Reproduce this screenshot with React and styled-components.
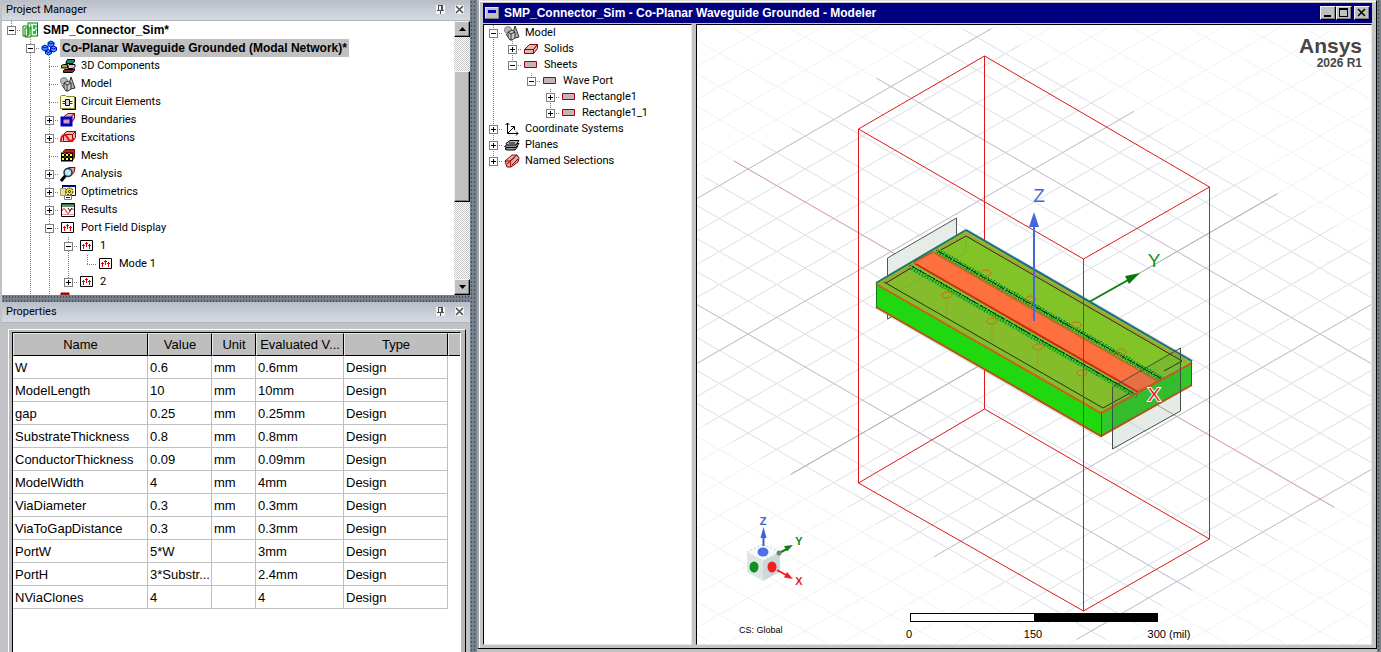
import React from 'react';
import styled, { createGlobalStyle, css } from 'styled-components';

const GlobalStyle = createGlobalStyle`
  * {
    box-sizing: border-box;
  }
  body {
    margin: 0;
    background: #c0c0c0;
    color: #000;
    font-family: "Liberation Sans", Arial, sans-serif;
    font-size: 11px;
    overflow: hidden;
  }
  button {
    font: inherit;
    padding: 0;
    margin: 0;
  }
`;

const Workspace = styled.div`
  display: grid;
  grid-template-columns: 470px 7px minmax(0, 1fr) 4px;
  height: 100vh;
`;

const Texture = styled.div`
  background-color: #78828c;
  background-image: radial-gradient(#48525c 1px, transparent 1px);
  background-size: 3px 4px;
  height: ${props => (props.$height ? `${props.$height}px` : 'auto')};
  flex: none;
`;

const Dock = styled.div`
  display: flex;
  flex-direction: column;
  min-height: 0;
  padding-left: 2px;
  background: #c0c2c6;
`;

const Pane = styled.section`
  display: flex;
  flex-direction: column;
  flex: ${props => props.$grow} 1 0;
  min-height: 0;
`;

const PaneHeader = styled.header`
  display: flex;
  align-items: center;
  gap: 10px;
  flex: none;
  height: 21px;
  padding: 0 6px 2px 4px;
  background: linear-gradient(#b9bdc5, #d6dae2);
  border-bottom: 1px solid #b2b6bc;
`;

const PaneTitle = styled.h2`
  flex: 1;
  margin: 0;
  font-family: Roboto, "Liberation Sans", sans-serif;
  font-size: 11px;
  font-weight: normal;
`;

const PaneButton = styled.button`
  display: flex;
  width: 9px;
  height: 9px;
  border: 0;
  background: #f4f4f4;
`;

const PaneBody = styled.div`
  display: flex;
  flex: 1;
  min-height: 0;
  background: #fff;
`;

const Tree = styled.ul`
  flex: 1;
  min-width: 0;
  margin: 0;
  padding: 0;
  list-style: none;
  overflow: hidden;
  background: #fff;
`;

const TreeRow = styled.li`
  display: flex;
  align-items: center;
  height: ${props => props.$height}px;
  white-space: nowrap;
`;

const vLine = 'repeating-linear-gradient(#808080 0 1px, transparent 1px 2px)';
const hLine = 'repeating-linear-gradient(90deg, #808080 0 1px, transparent 1px 2px)';

const guides = {
  none: 'none',
  line: `${vLine} 9px 0 / 1px 100% no-repeat`,
  tee: `${vLine} 9px 0 / 1px 100% no-repeat, ${hLine} 9px 50% / 10px 1px no-repeat`,
  elbow: `${vLine} 9px 0 / 1px 50% no-repeat, ${hLine} 9px 50% / 10px 1px no-repeat`,
};

const Guide = styled.span`
  display: flex;
  align-items: center;
  justify-content: center;
  flex: none;
  width: 19px;
  height: 100%;
  background: ${props => guides[props.$type]};
`;

const Toggle = styled.button`
  display: flex;
  width: 9px;
  height: 9px;
  border: 1px solid #808080;
  background: #fff;
`;

const Label = styled.span`
  margin-left: 3px;
  padding: 1px 2px;
  font-family: ${props => (props.$strong ? '"Liberation Sans"' : 'Roboto')}, Arial, sans-serif;
  font-size: ${props => (props.$strong ? '12px' : '11px')};
  font-weight: ${props => (props.$strong ? 'bold' : 'normal')};
  line-height: 16px;
  background: ${props => (props.$selected ? '#c0c0c0' : 'transparent')};
`;

const Icon = styled.svg`
  flex: none;
  width: 16px;
  height: 16px;
  margin-left: 1px;
`;

const ScrollBar = styled.div`
  display: flex;
  flex-direction: column;
  flex: none;
  width: 16px;
  background: repeating-conic-gradient(#c8c8c8 0 25%, #fff 0 50%) 0 0 / 2px 2px;
`;

const raised = css`
  border: 1px solid;
  border-color: #f4f4f4 #000 #000 #f4f4f4;
  background: #c0c0c0;
  box-shadow: inset -1px -1px #808080;
`;

const ScrollButton = styled.button`
  ${raised}
  display: flex;
  align-items: center;
  justify-content: center;
  flex: none;
  height: 16px;
`;

const ScrollGap = styled.div`
  flex: ${props => props.$grow};
`;

const ScrollThumb = styled.div`
  ${raised}
  flex: 130;
`;

const TableArea = styled.div`
  flex: 1;
  min-height: 0;
  margin: 6px 4px 0 6px;
  padding: 2px 4px 0 3px;
  border: solid;
  border-width: 1px 1px 0 1px;
  border-color: #fff #000 #fff #fff;
  background: #b8b8b8;
`;

const TableFrame = styled.div`
  height: 100%;
  overflow: hidden;
  border: solid;
  border-width: 1px 1px 0 1px;
  border-color: #000 #fff #000 #000;
  background: #fff;
`;

const Table = styled.table`
  width: 100%;
  table-layout: fixed;
  border-collapse: separate;
  border-spacing: 0;
  font-size: 13px;
`;

const HeadCell = styled.th`
  height: 23px;
  padding: 0 2px;
  font-weight: normal;
  white-space: nowrap;
  overflow: hidden;
  border: solid;
  border-width: 1px;
  border-color: #e8e8e8 #000 #000 #e8e8e8;
  background: #bebebe;
  &:last-child {
    border-right: 0;
  }
`;

const Cell = styled.td`
  height: 23px;
  padding: 0 2px;
  white-space: nowrap;
  overflow: hidden;
  border-right: 1px solid #c0c0c0;
  border-bottom: 1px solid #c0c0c0;
  &:last-child {
    border: 0;
  }
`;

const WindowFrame = styled.main`
  display: flex;
  flex-direction: column;
  min-width: 0;
  min-height: 0;
  margin-bottom: 3px;
  padding: 1px 4px 3px 4px;
  border: solid;
  border-width: 1px 1px 1px 2px;
  border-color: #e0e0e0 #000 #000 #a0a4a8;
  background: #c4c4c4;
  box-shadow: inset 1px 1px #fff;
`;

const TitleBar = styled.header`
  display: flex;
  align-items: center;
  flex: none;
  height: 20px;
  margin-top: 1px;
  padding: 0 2px;
  background: #000080;
`;

const Title = styled.h1`
  flex: 1;
  margin: 0 0 0 5px;
  font-size: 12px;
  color: #fff;
  white-space: nowrap;
  overflow: hidden;
`;

const WindowIcon = styled.svg`
  flex: none;
  width: 14px;
  height: 12px;
`;

const WindowButton = styled.button`
  ${raised}
  display: flex;
  width: 16px;
  height: 14px;
  margin-left: ${props => props.$gap || 0}px;
`;

const WindowBody = styled.div`
  display: grid;
  grid-template-columns: 209px minmax(0, 1fr);
  gap: 4px;
  flex: 1;
  min-height: 0;
  margin-top: 1px;
`;

const Sunken = styled.div`
  display: flex;
  position: relative;
  min-height: 0;
  overflow: hidden;
  border: 1px solid;
  border-color: #000 #e8e8e8 #e8e8e8 #000;
  background: #fff;
`;

const Scene = styled.svg`
  display: block;
  width: 100%;
  height: 100%;
`;

const Brand = styled.div`
  position: absolute;
  top: 10px;
  right: 9px;
  color: #464646;
  font-weight: bold;
  text-align: right;
`;

const BrandName = styled.div`
  font-size: 21px;
  line-height: 22px;
`;

const BrandVersion = styled.div`
  font-size: 12px;
  line-height: 13px;
`;

const SystemNote = styled.div`
  position: absolute;
  left: 42px;
  bottom: 8px;
  font-size: 9px;
  line-height: 12px;
`;

const icons = {
  project: (
    <>
      <rect x="6" y="1" width="9.5" height="13" fill="#e8ffe8" stroke="#008000" />
      <path d="M1 4h5v10H1z M3 6h6v9H3z" fill="#e8ffe8" stroke="#108010" />
      <path d="M5 8h3M5 10h3M5 12h3M8 3h1M8 5h2M8 7h1" stroke="#008000" />
      <path d="M11 3h2v4h-2zM11 9h3v3h-3z" fill="#00d020" />
      <path d="M13 8h2M14 3v3" stroke="#00a020" />
    </>
  ),
  design: (
    <g fill="#28a8f8" stroke="#0000c8">
      <path d="M7 2.500l3-1.500 3 1.500v3l-3 1.500-3-1.500z" />
      <path d="M1 6.500l3-1.500 3 1.500v3l-3 1.500-3-1.500z" />
      <path d="M9.500 7.500l3-1.500 3 1.500v3l-3 1.500-3-1.500z" />
      <path d="M4.500 11l3-1.500 3 1.500v2.500l-3 1.500-3-1.500z" />
      <path d="M7 2.500l3 1.500 3-1.500M1 6.500l3 1.500 3-1.500M9.500 7.500l3 1.500 3-1.500M4.500 11l3 1.500 3-1.500" fill="none" />
    </g>
  ),
  components: (
    <g stroke="#000">
      <path d="M6 4.500l1.500-3h7v2l-1.500 2H6z" fill="#208878" />
      <path d="M1.500 9.500v-2l2-1h4v3.500h-6z" fill="#a8a820" />
      <path d="M8 10V7.500l1-1h6v2l-2 2H8z" fill="#d0d0d0" />
      <path d="M3.500 14.500v-2l1.500-1h8l1.500-1v2l-2 2z" fill="#902020" />
    </g>
  ),
  model: (
    <g stroke="#303030">
      <circle cx="4" cy="5" r="3.5" fill="#b8b8b8" stroke="#808080" />
      <path d="M11 1l4 11-4 1-3-2z" fill="#b0b0b0" />
      <path d="M4 7l4-2 3 2v6l-3 2H6l-2-3z" fill="#c8c8c8" />
      <path d="M4 7l3 2 4-2M7 9v6M2 9l2 3" fill="none" />
    </g>
  ),
  circuit: (
    <>
      <path d="M.5 2.500l1-1h4l1 1h8v12H.5z" fill="#ffffa8" stroke="#888830" />
      <path d="M2 4h11v9H2z" fill="#fffff0" />
      <path d="M15.500 3v12.500H2" fill="none" stroke="#000" />
      <path d="M5.500 5.500h4v6h-4z" fill="#d8d8d8" stroke="#000" />
      <path d="M2.500 7.500h3M2.500 9.500h3M9.500 7.500h3M9.500 9.500h3" stroke="#b00000" />
    </>
  ),
  boundary: (
    <>
      <path d="M4 4.500l4-3h6.500v5l-3 4" fill="#e8b0b8" stroke="#a00000" />
      <path d="M11 4.500l3.500-3" stroke="#a00000" />
      <path d="M2 6h9v7H2z" fill="#d0a0c0" stroke="#0000c0" strokeWidth="3" />
    </>
  ),
  excitation: (
    <>
      <path d="M3.500 4.500l3-3h9v6l-3 4h-9z" fill="#e8b8b8" stroke="#a00000" />
      <path d="M12.500 4.500l3-3M3.500 4.500h9v7" fill="none" stroke="#a00000" />
      <path d="M1 11c0-6 4-8 6-4s4 6 7 1" fill="none" stroke="#f01010" strokeWidth="2" />
      <path d="M0 11.500h4" stroke="#f01010" />
    </>
  ),
  mesh: (
    <>
      <path d="M3 4l2-2.500h9.500v8L12 13" fill="#c02020" stroke="#700000" />
      <path d="M1 4.500h12v9H1z" fill="#000" />
      <path d="M2 6h2v2H2zM6 6h2v2H6zM10 6h2v2h-2zM2 10h2v2H2zM6 10h2v2H6zM10 10h2v2h-2zM4.500 5h1v1h-1zM8.500 5h1v1h-1zM4.500 8.500h1v1h-1zM8.500 8.500h1v1h-1z" fill="#ffff30" />
    </>
  ),
  analysis: (
    <>
      <path d="M6 4l3-2.500h6l-1 5-4 4" fill="#e0a8a8" stroke="#900000" />
      <path d="M6 9l-5 6" stroke="#000" strokeWidth="3" />
      <circle cx="8" cy="6.500" r="4" fill="#a8e0f8" stroke="#203040" strokeWidth="1.500" />
      <path d="M6 7l2-3M8 9l2-3" stroke="#fff" />
    </>
  ),
  optimetrics: (
    <>
      <path d="M2.500 1.500h13v10h-13z" fill="#fff" stroke="#000080" />
      <path d="M2 2h14" stroke="#000080" strokeWidth="2" />
      <path d="M.5 4.500h5v7h-5z" fill="#e8e0a0" stroke="#a0a060" />
      <circle cx="9.500" cy="7.500" r="3.500" fill="#f8e820" stroke="#000" strokeDasharray="2 1" />
      <circle cx="9.500" cy="7.500" r="1" fill="#fff" stroke="#000" />
      <path d="M4.500 11.500h7v4h-7z" fill="#fff" stroke="#808080" />
      <path d="M6 13.500h4" stroke="#0000c0" />
    </>
  ),
  results: (
    <>
      <path d="M1.500 1.500h13v13h-13z" fill="#fff" stroke="#000" />
      <path d="M2 2.500h12" stroke="#108030" />
      <path d="M2 4h12" stroke="#000" />
      <path d="M2 9c1-3 3-3 4 0s3 3 4 0 2-3 4-1" fill="none" stroke="#e00000" />
      <path d="M8 6l2 3 2-3" fill="none" stroke="#202020" />
      <path d="M2 12.500h12" stroke="#f09090" />
    </>
  ),
  port: (
    <>
      <path d="M1.500 2.500h12v10h-12z" fill="#fff" stroke="#000" />
      <path d="M4.500 6v5M7.500 4v5M10.500 6v5M3 7.500h3M6 5.500h3M9 7.500h3" stroke="#e00000" />
    </>
  ),
  overlay: <path d="M1 1h8v3h4v10H1z" fill="#c01010" stroke="#700000" />,
  solid: (
    <g fill="#e0b8b0" stroke="#900000">
      <path d="M1.500 8.500l5-5h8l-4 5z" />
      <path d="M1.500 8.500h9v4h-9z" />
      <path d="M10.500 8.500l4-5v4l-4 5z" />
    </g>
  ),
  sheet: <path d="M1.500 4.500h12v6h-12z" fill="#c8b4b4" stroke="#a00010" />,
  axes: (
    <g fill="none" stroke="#000">
      <path d="M3.500 2v10.500H14M1.500 4l2-2 2 2M12 10.500l2 2-2 2M3.500 12.500L10 6M7 5.500h3.500V9" />
    </g>
  ),
  planes: (
    <g stroke="#000" fill="#989898">
      <path d="M1 12l4-3h9l-3 4H3z" />
      <path d="M.5 9.500l4-3h10.500l-3 4h-10z" />
      <path d="M2 6.500l4-3h9l-3 4.500H3z" fill="#b8b8b8" />
      <path d="M5 6h6" />
    </g>
  ),
  selections: (
    <g stroke="#980000" fill="#d8b0a8">
      <path d="M1 8l7-6h5l2 3-1 4-7 5H3z" />
      <path d="M1 8h5l7-6M6 8l1 6M3 11l8-7M8 12l6-6" fill="none" />
    </g>
  ),
};

// Guide codes: "." blank, "|" line, "t" tee, "l" elbow,
// "p"/"m" plus and minus with a full line, "P"/"M" the same on a last child.
const cellTypes = {
  '.': ['none'],
  '|': ['line'],
  t: ['tee'],
  l: ['elbow'],
  p: ['tee', 'plus'],
  P: ['elbow', 'plus'],
  m: ['tee', 'minus'],
  M: ['elbow', 'minus'],
};

const projectTree = [
  { cells: 'M', icon: 'project', label: 'SMP_Connector_Sim*', strong: true },
  { cells: '.m', icon: 'design', label: 'Co-Planar Waveguide Grounded (Modal Network)*', strong: true, selected: true },
  { cells: '.|t', icon: 'components', label: '3D Components' },
  { cells: '.|t', icon: 'model', label: 'Model' },
  { cells: '.|t', icon: 'circuit', label: 'Circuit Elements' },
  { cells: '.|p', icon: 'boundary', label: 'Boundaries' },
  { cells: '.|p', icon: 'excitation', label: 'Excitations' },
  { cells: '.|t', icon: 'mesh', label: 'Mesh' },
  { cells: '.|p', icon: 'analysis', label: 'Analysis' },
  { cells: '.|p', icon: 'optimetrics', label: 'Optimetrics' },
  { cells: '.|p', icon: 'results', label: 'Results' },
  { cells: '.|m', icon: 'port', label: 'Port Field Display' },
  { cells: '.||m', icon: 'port', label: '1' },
  { cells: '.|||l', icon: 'port', label: 'Mode 1' },
  { cells: '.||P', icon: 'port', label: '2' },
  { cells: '.||', icon: 'overlay' },
];

const modelTree = [
  { cells: 'm', icon: 'model', label: 'Model' },
  { cells: '|p', icon: 'solid', label: 'Solids' },
  { cells: '|M', icon: 'sheet', label: 'Sheets' },
  { cells: '|.M', icon: 'sheet', label: 'Wave Port' },
  { cells: '|..p', icon: 'sheet', label: 'Rectangle1' },
  { cells: '|..P', icon: 'sheet', label: 'Rectangle1_1' },
  { cells: 'p', icon: 'axes', label: 'Coordinate Systems' },
  { cells: 'p', icon: 'planes', label: 'Planes' },
  { cells: 'P', icon: 'selections', label: 'Named Selections' },
];

const columns = [
  { title: 'Name', width: 135 },
  { title: 'Value', width: 64 },
  { title: 'Unit', width: 44 },
  { title: 'Evaluated V...', width: 88 },
  { title: 'Type', width: 104 },
  { title: '' },
];

const variables = [
  ['W', '0.6', 'mm', '0.6mm'],
  ['ModelLength', '10', 'mm', '10mm'],
  ['gap', '0.25', 'mm', '0.25mm'],
  ['SubstrateThickness', '0.8', 'mm', '0.8mm'],
  ['ConductorThickness', '0.09', 'mm', '0.09mm'],
  ['ModelWidth', '4', 'mm', '4mm'],
  ['ViaDiameter', '0.3', 'mm', '0.3mm'],
  ['ViaToGapDistance', '0.3', 'mm', '0.3mm'],
  ['PortW', '5*W', '', '3mm'],
  ['PortH', '3*Substr...', '', '2.4mm'],
  ['NViaClones', '4', '', '4'],
];

function TreeView({ items, rowHeight }) {
  return (
    <Tree>
      {items.map((item, i) => (
        <TreeRow key={i} $height={rowHeight}>
          {item.cells.split('').map((code, j) => {
            const [type, toggle] = cellTypes[code];
            return (
              <Guide key={j} $type={type}>
                {toggle && (
                  <Toggle aria-label={toggle === 'plus' ? 'Expand' : 'Collapse'}>
                    <svg width="7" height="7" stroke="#000" shapeRendering="crispEdges">
                      <path d={toggle === 'plus' ? 'M1 3.500h5M3.500 1v5' : 'M1 3.500h5'} />
                    </svg>
                  </Toggle>
                )}
              </Guide>
            );
          })}
          <Icon viewBox="0 0 16 16" fill="none">{icons[item.icon]}</Icon>
          {item.label && (
            <Label $strong={item.strong} $selected={item.selected}>{item.label}</Label>
          )}
        </TreeRow>
      ))}
    </Tree>
  );
}

function DockHeader({ title }) {
  return (
    <PaneHeader>
      <PaneTitle>{title}</PaneTitle>
      <PaneButton aria-label="Auto hide">
        <svg width="9" height="9" fill="none" stroke="#505050" shapeRendering="crispEdges">
          <path d="M2.500 5V.5h4V5M1 5.500h7M5.500 1v4M4.500 6v3" />
        </svg>
      </PaneButton>
      <PaneButton aria-label="Close">
        <svg width="9" height="9" stroke="#505050">
          <path d="M1 1l7 7M8 1l-7 7" strokeWidth="1.500" />
        </svg>
      </PaneButton>
    </PaneHeader>
  );
}

function PropertyTable() {
  return (
    <Table>
      <colgroup>
        {columns.map((col, i) => <col key={i} width={col.width} />)}
      </colgroup>
      <thead>
        <tr>
          {columns.map((col, i) => <HeadCell key={i}>{col.title}</HeadCell>)}
        </tr>
      </thead>
      <tbody>
        {variables.map((row) => (
          <tr key={row[0]}>
            {row.map((value, i) => <Cell key={i}>{value}</Cell>)}
            <Cell>Design</Cell>
            <Cell />
          </tr>
        ))}
      </tbody>
    </Table>
  );
}

// Isometric grid: u runs along the X axis, v along the Y axis.
const project = (u, v) => [1034 + 28.6 * (u + v), 334 + 16.5 * (u - v)];

const segment = (u1, v1, u2, v2) => {
  const [x1, y1] = project(u1, v1);
  const [x2, y2] = project(u2, v2);
  return `M${x1.toFixed(1)} ${y1.toFixed(1)}L${x2.toFixed(1)} ${y2.toFixed(1)}`;
};

const range = (from, to) => Array.from({ length: to - from + 1 }, (_, i) => from + i);

const outerGrid = range(-24, 24).map((n) => segment(n, -24, n, 24) + segment(-24, n, 24, n)).join('');
const innerGrid =
  range(-10, 10).map((u) => segment(u, -8.5, u, 8.5)).join('') +
  range(-8, 8).map((v) => segment(-10.5, v, 10.5, v)).join('');
const majorGrid =
  [-10, -5, 5, 10].map((u) => segment(u, -8.5, u, 8.5)).join('') +
  [-5, 5].map((v) => segment(-10.5, v, 10.5, v)).join('');

const vias = [
  [947, 295], [992, 321], [1038, 347], [1082, 373],
  [986, 273], [1031, 299], [1076, 325], [1121, 352],
];

function Board() {
  return (
    <g>
      <path d="M887.500 258L956.500 218V280L887.500 319z" fill="#e6ece8" stroke="#505850" />
      <path d="M876 283L1101 412V437L876 308z" fill="#20d810" />
      <path d="M1101 412L1192 361V385L1101 437z" fill="#30c828" />
      <path d="M966 230L1192 361L1101 412L876 283z" fill="#82c428" />
      <path d="M876 283L910 264L1135 393L1101 412z" fill="#84bc2c" />
      <path d="M966 240V253L900 290" fill="none" stroke="#76b428" />

      <g fill="none" shapeRendering="crispEdges">
        <path d="M908 266L1134 395" stroke="#48c020" strokeWidth="5" />
        <path d="M936 250L1162 379" stroke="#48c020" strokeWidth="5" />
        <path d="M912 268L1138 397" stroke="#208830" strokeWidth="4" strokeDasharray="1 2" />
        <path d="M938 251L1164 380" stroke="#208830" strokeWidth="5" strokeDasharray="1 2" />
        <path d="M910 265L1135 394" stroke="#104028" strokeDasharray="9 1" />
        <path d="M936 250L1162 379" stroke="#104028" strokeDasharray="9 1" />
      </g>
      <path d="M914 262L933 252L1158 381L1137 393z" fill="#ff7040" />
      <path d="M914 263L1138 392" stroke="#d02810" strokeWidth="2" />
      <path d="M933 252L1158 381" stroke="#b07020" strokeWidth="2" />
      <path d="M914 262L933 252M1137 392L1158 381" stroke="#c03010" />

      {vias.map(([x, y]) => (
        <g key={x} stroke="#d86818" fill="none">
          <ellipse cx={x} cy={y} rx="5" ry="3" />
          <path d={`M${x} ${y + 4}v16`} opacity="0.3" />
        </g>
      ))}

      <g fill="none">
        <path d="M876 283L966 230" stroke="#207868" strokeWidth="2" />
        <path d="M966 230L1192 361" stroke="#206888" strokeWidth="2" />
        <path d="M882 283L966 234L1187 362" stroke="#d87850" />
        <path d="M886 283L911 268M941 250L966 236L1182 361L1164 371" stroke="#302820" />
        <path d="M884 282L1103 408L1130 393" stroke="#183818" />
        <path d="M876 284L1101 413L1192 363" stroke="#c86018" strokeWidth="2" />
        <path d="M876 307L1101 436L1192 385" stroke="#c05018" strokeWidth="2" />
        <path d="M876.500 283v25M1101.500 412v25M1191.500 361v25" stroke="#187818" />
      </g>
      <path d="M1112.500 387L1180.500 348V411L1112.500 449z" fill="#487858" fillOpacity="0.14" stroke="#405040" />
    </g>
  );
}

function ViewCube() {
  return (
    <g>
      <path d="M763 544L780 552L763 561L747 552z" fill="#f6fafa" stroke="#c4ced0" strokeDasharray="2 2" />
      <path d="M747 552L763 561V581L747 572z" fill="#dce6e8" />
      <path d="M780 552L763 561V581L780 572z" fill="#ccd8dc" />
      <ellipse cx="763" cy="552" rx="5.500" ry="4.500" fill="#5070e8" />
      <ellipse cx="754" cy="567" rx="4.500" ry="5.500" fill="#10901c" />
      <ellipse cx="772" cy="567" rx="4.500" ry="5.500" fill="#f02020" />
      <path d="M763.500 546V534" stroke="#4060d0" strokeWidth="2" />
      <path d="M763.500 527l3 11h-6z" fill="#4060d0" />
      <path d="M779 553L787 549" stroke="#108018" strokeWidth="2" />
      <path d="M793 545L784 546L787 551.500z" fill="#108018" />
      <circle cx="779" cy="553" r="2.500" fill="#708078" />
      <path d="M777 570L786 575" stroke="#f02020" strokeWidth="2" />
      <path d="M793 579L784 577.500L787 572z" fill="#f02020" />
      <g fontSize="11" fontWeight="bold" textAnchor="middle">
        <text x="763" y="525" fill="#4060d0">Z</text>
        <text x="799" y="545" fill="#108018">Y</text>
        <text x="799" y="585" fill="#f02020">X</text>
      </g>
    </g>
  );
}

function ModelScene() {
  return (
    <Scene viewBox="697 25 674 619" preserveAspectRatio="xMidYMid slice">
      <g fill="none" strokeWidth="1">
        <path d={outerGrid} stroke="#f2f2f4" />
        <path d={innerGrid} stroke="#e0e2ea" />
        <path d={majorGrid} stroke="#c2c2ce" />
        <path d={segment(-10.5, 0, 10.5, 0)} stroke="#d8a0a8" />
        <path d={segment(0, -8.5, 0, 8.5)} stroke="#a0b0a8" />
      </g>
      <path d="M984.500 56V409L858.500 483M984.500 409L1209.500 539" fill="none" stroke="#e01818" />
      <Board />
      <g fill="none" stroke="#e01818">
        <path d="M984.500 56L1209.500 187L1083.500 259L858.500 129z" />
        <path d="M858.500 129V483L1083.500 611L1209.500 539V187M1083.500 259V611" />
      </g>

      <path d="M1034 224V321" stroke="#4468d8" strokeWidth="2" />
      <path d="M1034 212l5 15h-10z" fill="#4468d8" />
      <path d="M1089 302L1130 279" stroke="#108018" strokeWidth="2" />
      <path d="M1140 273L1125 276L1129 284z" fill="#087810" />
      <g fontSize="19" textAnchor="middle">
        <text x="1039" y="202" fill="#4468d8">Z</text>
        <text x="1154" y="267" fill="#10901c">Y</text>
        <text x="1154" y="401" fill="#e82020" stroke="#fff" strokeWidth="2" paintOrder="stroke">X</text>
      </g>

      <ViewCube />

      <g shapeRendering="crispEdges">
        <rect x="910.500" y="613.500" width="247" height="8" fill="#fff" stroke="#000" />
        <rect x="1034" y="613" width="124" height="9" fill="#000" />
      </g>
      <g fontSize="11" textAnchor="middle">
        <text x="909" y="638">0</text>
        <text x="1033" y="638">150</text>
        <text x="1169" y="638">300 (mil)</text>
      </g>
    </Scene>
  );
}

function App() {
  return (
    <>
      <GlobalStyle />
      <Workspace>
        <Dock>
          <Pane $grow={295}>
            <DockHeader title="Project Manager" />
            <PaneBody>
              <TreeView items={projectTree} rowHeight={18} />
              <ScrollBar>
                <ScrollButton aria-label="Scroll up">
                  <svg width="7" height="4"><path d="M0 4L3.500 0L7 4z" /></svg>
                </ScrollButton>
                <ScrollGap $grow={34} />
                <ScrollThumb />
                <ScrollGap $grow={78} />
                <ScrollButton aria-label="Scroll down">
                  <svg width="7" height="4"><path d="M0 0L3.500 4L7 0z" /></svg>
                </ScrollButton>
              </ScrollBar>
            </PaneBody>
          </Pane>
          <Texture $height={7} />
          <Pane $grow={350}>
            <DockHeader title="Properties" />
            <TableArea>
              <TableFrame>
                <PropertyTable />
              </TableFrame>
            </TableArea>
          </Pane>
        </Dock>
        <Texture />
        <WindowFrame>
          <TitleBar>
            <WindowIcon viewBox="0 0 14 12">
              <rect width="14" height="12" fill="#808080" />
              <path d="M0 0h13v11H0z" fill="#e8e8e8" />
              <path d="M1 1h12v10H1z" fill="#c0c0c0" />
              <path d="M3 3h8v3H3z" fill="#0000c0" />
            </WindowIcon>
            <Title>SMP_Connector_Sim - Co-Planar Waveguide Grounded - Modeler</Title>
            <WindowButton aria-label="Minimize">
              <svg width="14" height="12"><path d="M3 8h7v2H3z" /></svg>
            </WindowButton>
            <WindowButton aria-label="Maximize">
              <svg width="14" height="12" fill="none" stroke="#000" shapeRendering="crispEdges">
                <path d="M2.500 1.500h8v8h-8zM2 2.500h9" />
              </svg>
            </WindowButton>
            <WindowButton $gap={2} aria-label="Close">
              <svg width="14" height="12" stroke="#000" strokeWidth="1.500">
                <path d="M3 2l7 7M10 2L3 9" />
              </svg>
            </WindowButton>
          </TitleBar>
          <WindowBody>
            <Sunken>
              <TreeView items={modelTree} rowHeight={16} />
            </Sunken>
            <Sunken>
              <ModelScene />
              <Brand>
                <BrandName>Ansys</BrandName>
                <BrandVersion>2026 R1</BrandVersion>
              </Brand>
              <SystemNote>CS: Global</SystemNote>
            </Sunken>
          </WindowBody>
        </WindowFrame>
        <Texture />
      </Workspace>
    </>
  );
}

export default App;
